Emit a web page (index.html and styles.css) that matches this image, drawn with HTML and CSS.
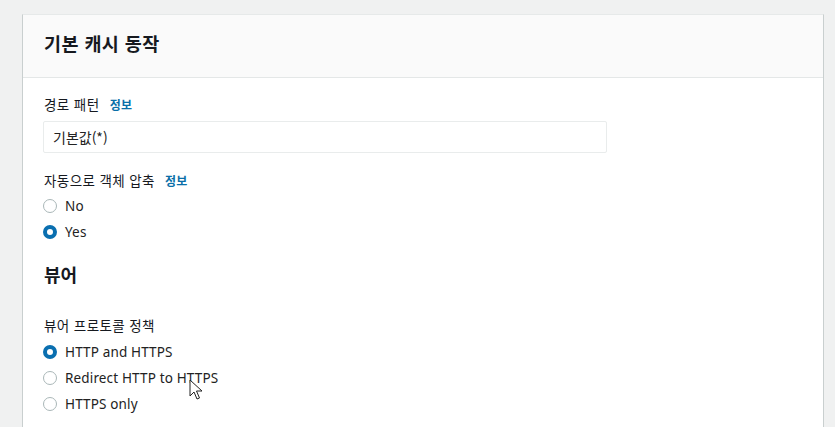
FILE: index.html
```html
<!DOCTYPE html>
<html lang="ko">
<head>
<meta charset="utf-8">
<link rel="stylesheet" href="styles.css">
</head>
<body>
<div class="page">
  <section class="card">
    <header class="card-header">
      <h2 class="card-title">기본 캐시 동작</h2>
    </header>
    <div class="card-body">
      <div class="field">
        <div class="label">경로 패턴 <a class="info">정보</a></div>
        <div class="input">기본값(*)</div>
      </div>
      <div class="field field-radio">
        <div class="label">자동으로 객체 압축 <a class="info">정보</a></div>
        <div class="radios">
          <label class="radio"><span class="dot"></span>No</label>
          <label class="radio"><span class="dot checked"></span>Yes</label>
        </div>
      </div>
      <h3 class="section-title">뷰어</h3>
      <div class="field">
        <div class="label">뷰어 프로토콜 정책</div>
        <div class="radios radios-wide">
          <label class="radio"><span class="dot checked"></span>HTTP and HTTPS</label>
          <label class="radio"><span class="dot"></span>Redirect HTTP to HTTPS</label>
          <label class="radio"><span class="dot"></span>HTTPS only</label>
        </div>
      </div>
    </div>
  </section>
  <svg class="cursor" width="14" height="22" viewBox="0 0 14 22">
    <path d="M1 1 L1 17 L5 13 L8 20 L10.5 19 L7.5 12 L13 12 Z" fill="#fff" stroke="#222" stroke-width="1" stroke-linejoin="round"/>
  </svg>
</div>
</body>
</html>
```
FILE: styles.css
```css
html, body {
  margin: 0;
  padding: 0;
}
body {
  background: #f0f1f1;
  font-family: "Noto Sans", "Noto Sans CJK KR", sans-serif;
  color: #16191f;
  width: 835px;
  height: 427px;
  overflow: hidden;
}
.page {
  position: relative;
  padding: 14px 11px 0 22px;
  height: 413px;
}
.card {
  background: #fff;
  border-left: 1px solid #c9cfcf;
  border-right: 1px solid #c9cfcf;
  border-top: 1px solid #e6e9e9;
  height: 100%;
}
.card-header {
  background: #fafafa;
  border-bottom: 1px solid #e4e7e7;
  height: 63px;
  box-sizing: border-box;
  display: flex;
  align-items: center;
  padding: 0 21px 6px 21px;
}
.card-title {
  margin: 0;
  font-size: 18.5px;
  font-weight: 700;
  font-family: "Noto Sans CJK KR", sans-serif;
  letter-spacing: 0.4px;
}
.card-body {
  padding: 16px 21px 0 21px;
}
.label {
  font-family: "Noto Sans CJK KR", sans-serif;
  font-size: 13.5px;
  line-height: 20px;
  letter-spacing: 0.4px;
}
.info {
  color: #0a6fa8;
  font-size: 12px;
  font-weight: 700;
  margin-left: 6px;
  letter-spacing: 0.2px;
}
.input {
  margin-top: 6px;
  margin-left: -1px;
  width: 553px;
  height: 30px;
  border: 1px solid #e9ecec;
  border-radius: 2px;
  padding: 0 0 0 9px;
  display: flex;
  align-items: center;
  font-size: 14px;
  font-family: "Noto Sans CJK KR", sans-serif;
  color: #222;
}
.field-radio {
  margin-top: 17px;
}
.radios {
  display: flex;
  flex-direction: column;
  margin-top: 2px;
}
.radios-wide {
  margin-top: 4px;
}
.radio {
  display: flex;
  align-items: center;
  height: 26px;
  font-size: 13.5px;
  color: #222;
  letter-spacing: 0.15px;
}
.dot {
  box-sizing: border-box;
  width: 14px;
  height: 14px;
  border-radius: 50%;
  border: 1.5px solid #aab7b8;
  background: #fff;
  margin-left: -1px;
  margin-right: 8px;
}
.dot.checked {
  border: 4px solid #0a6fb0;
}
.section-title {
  margin: 16px 0 0 0;
  font-family: "Noto Sans CJK KR", sans-serif;
  font-size: 18px;
  font-weight: 700;
  line-height: 26px;
}
.section-title + .field {
  margin-top: 28px;
}
.cursor {
  position: absolute;
  left: 189px;
  top: 379px;
}
```
